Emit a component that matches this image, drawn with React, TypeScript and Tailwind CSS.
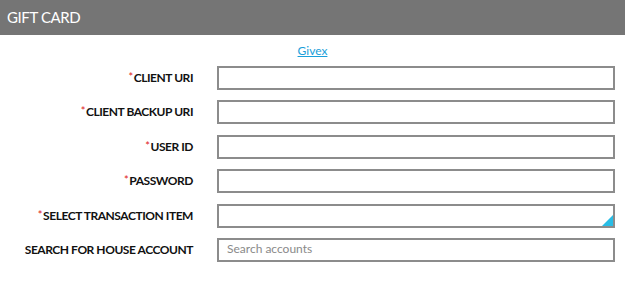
const fields = [
  { label: "CLIENT URI", required: true },
  { label: "CLIENT BACKUP URI", required: true },
  { label: "USER ID", required: true },
  { label: "PASSWORD", required: true },
  { label: "SELECT TRANSACTION ITEM", required: true, select: true },
  { label: "SEARCH FOR HOUSE ACCOUNT", placeholder: "Search accounts" },
];

export default function App() {
  return (
    <div className="w-[625px] h-[286px] bg-white font-['Lato',sans-serif]">
      <div className="h-[35px] bg-[#757575] flex items-center px-[7px]">
        <h2 className="text-white text-[15px] tracking-[-0.4px] leading-none">GIFT CARD</h2>
      </div>
      <div className="pt-[8px] text-center text-[12px] leading-[16px]">
        <a href="#" className="text-[#1a9ed9] underline">
          Givex
        </a>
      </div>
      <div className="mt-[7px] grid grid-cols-[193px_398px] gap-x-[24px] gap-y-[10.4px]">
        {fields.map((f) => (
          <div key={f.label} className="contents">
            <label className="flex items-center justify-end text-[12px] font-bold tracking-[-0.45px] text-[#111] leading-none">
              {f.required && (
                <span className="text-[#e02020] text-[11px] font-normal -mt-[3px] mr-[1px]">*</span>
              )}
              {f.label}
            </label>
            <div className="relative h-[24px] border-2 border-[#8c8c8c]">
              <input
                className="block w-full h-full px-[8px] pb-[2px] text-[12px] leading-none outline-none placeholder:text-[#8a8a8a] font-['Lato',sans-serif]"
                placeholder={f.placeholder}
              />
              {f.select && (
                <svg className="absolute right-0 bottom-0" width="11" height="11" viewBox="0 0 11 11">
                  <polygon points="11,0 11,11 0,11" fill="#29bde6" />
                </svg>
              )}
            </div>
          </div>
        ))}
      </div>
    </div>
  );
}
